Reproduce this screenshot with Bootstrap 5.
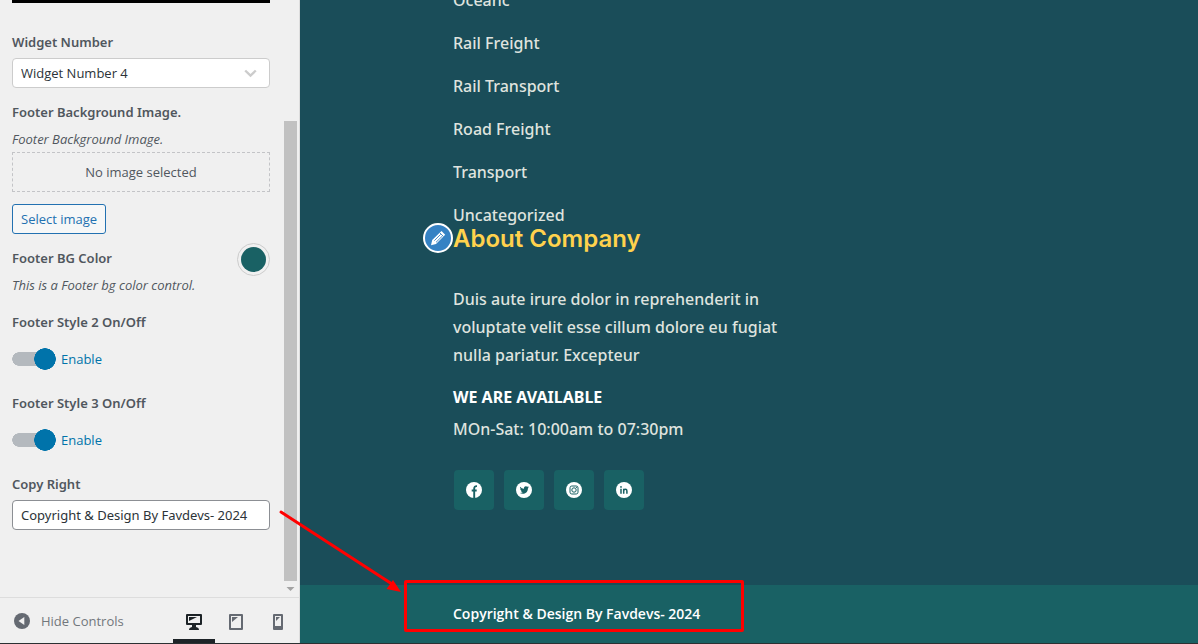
<!DOCTYPE html>
<html lang="en">
<head>
<meta charset="utf-8">
<meta name="viewport" content="width=device-width, initial-scale=1">
<title>Customizer - Footer</title>
<link href="https://cdn.jsdelivr.net/npm/bootstrap@5.3.0/dist/css/bootstrap.min.css" rel="stylesheet">
<style>
body{font:400 13px/20px "Open Sans",sans-serif;color:#50575e;background:#1a4d59}
.shell{min-height:100vh;border-bottom:1px solid #2b3032}
.side{flex:0 0 300px;background:#f0f0f0;border-right:1px solid #ddd}
.side-body{padding:0 14px 0 12px}
.top-bar{height:3px;background:#000;margin-bottom:27px}
.ttl{display:block;font-family:"Noto Sans",sans-serif;font-weight:600;line-height:24px;margin:0}
.hint{font-style:italic;line-height:18px;margin-top:6px}
.field{height:30px;padding:0 8px;margin-top:4px;font-size:13px;line-height:28px;border:1px solid #8c8f94;border-radius:4px;color:#2c3338;background-color:#fff}
input.field{font-family:"Noto Sans",sans-serif}
select.field{border-color:#ccc;margin-bottom:12px;background-position:right 12px center;background-size:13px 9px;background-image:url("data:image/svg+xml,%3Csvg xmlns='http://www.w3.org/2000/svg' viewBox='0 0 13 9'%3E%3Cpath d='M1.2 1.5l5.3 5 5.3-5' fill='none' stroke='%23ccc' stroke-width='2.4'/%3E%3C/svg%3E")}
.placeholder-box{height:40px;line-height:38px;border:1px dashed #c3c4c7;text-align:center;margin:4px 0 12px}
.btn-pick{height:30px;padding:0 8px;font-size:13px;line-height:28px;color:#2271b1;border:1px solid #2271b1;border-radius:3px;background:#f6f7f7;margin-bottom:9px}
.swatch-row .ttl{padding-top:3px}
.swatch{width:33px;height:33px;border:1px solid #ccc;border-radius:50%;padding:3px;background:#f0f0f0}
.swatch span{display:block;height:100%;border-radius:50%;background:#196164}
.toggle{height:22px;gap:5px;margin:14px 0 21px;color:#0073aa}
.toggle input{appearance:none;width:44px;height:22px;margin:0;background:radial-gradient(circle at 33px 11px,#0073aa 10.5px,transparent 11px),radial-gradient(circle at 7px 11px,#b4b9be 6.5px,transparent 7px),linear-gradient(#b4b9be,#b4b9be) 7px 4px/26px 14px no-repeat}
.scroller{flex:0 0 15px;padding-right:2px}
.scroller .thumb{margin-top:121px;background:#c1c1c1}
.side-foot{height:46px;border-top:1px solid #ddd;color:#72777c}
.side-foot button{border:0;background:none;padding:0;color:inherit}
.side-foot .collapse-btn{margin-left:14px;gap:11px}
.dev{width:42px;height:45px}
.side-foot .dev.on{border-bottom:4px solid #1d2327;padding-top:4px}
.site{font:500 16px/28px "Noto Sans",sans-serif;color:#dfe3df;min-width:0}
.site a{color:inherit;text-decoration:none}
.foot-main{padding-left:153px;overflow:hidden}
.cats{gap:23px;margin:-10px 0 0;line-height:20px}
.about{max-width:330px}
.about h2{font:600 24px/28px Inter,sans-serif;color:#ffd24d;margin:0 0 32px}
.edit{left:-30px;top:-2px;width:30px;height:30px;border:2px solid #fff;border-radius:50%;background:#3582c4;padding:0}
.avail{font-weight:700;color:#fff;margin-top:14px}
.hours{margin:4px 0 27px}
.socials{gap:10px;padding-left:1px}
.soc{width:40px;height:40px;border-radius:4px;background:#196164}
.copy{height:58px;padding-left:153px;background:#196164;color:#fff;font-family:"Open Sans",sans-serif;font-size:14px;font-weight:600}
.callout{left:104px;top:-5px;width:340px;height:52px;border:3px solid #f00;border-radius:2px;pointer-events:none}
.arrow{left:-23px;top:-78px;z-index:3;pointer-events:none}
</style>
</head>
<body>
<div class="shell d-flex">
  <aside class="side d-flex flex-column">
    <div class="d-flex flex-grow-1">
      <div class="side-body flex-grow-1">
        <div class="top-bar"></div>
        <label class="ttl" for="num">Widget Number</label>
        <select class="form-select field" id="num"><option>Widget Number 4</option></select>
        <div class="ttl">Footer Background Image.</div>
        <div class="hint">Footer Background Image.</div>
        <div class="placeholder-box">No image selected</div>
        <button type="button" class="btn btn-pick d-block">Select image</button>
        <div class="swatch-row d-flex justify-content-between align-items-start">
          <span class="ttl">Footer BG Color</span>
          <button type="button" class="swatch" aria-label="Footer BG Color"><span></span></button>
        </div>
        <div class="hint mt-0">This is a Footer bg color control.</div>
        <div class="ttl mt-3">Footer Style 2 On/Off</div>
        <div class="toggle d-flex align-items-center"><input type="checkbox" role="switch" id="s2" checked><label for="s2">Enable</label></div>
        <div class="ttl">Footer Style 3 On/Off</div>
        <div class="toggle d-flex align-items-center"><input type="checkbox" role="switch" id="s3" checked><label for="s3">Enable</label></div>
        <label class="ttl" for="cr">Copy Right</label>
        <input class="form-control field" id="cr" type="text" value="Copyright &amp; Design By Favdevs- 2024">
      </div>
      <div class="scroller d-flex flex-column">
        <div class="thumb flex-grow-1"></div>
        <svg width="13" height="16" viewBox="0 0 13 16"><path d="M2.5 6h8l-4 4z" fill="#a3a3a3"/></svg>
      </div>
    </div>
    <div class="side-foot d-flex align-items-center">
      <button type="button" class="collapse-btn d-flex align-items-center flex-grow-1">
        <svg width="16" height="16" viewBox="0 0 16 16"><circle cx="8" cy="8" r="8" fill="#656a72"/><path d="M10.3 4v8L4.5 8z" fill="#f0f0f0"/></svg>
        <span>Hide Controls</span>
      </button>
      <button type="button" class="dev on" aria-label="Desktop"><svg width="16" height="16" viewBox="0 0 16 16"><path fill="#1d2327" fill-rule="evenodd" d="M1 0h14q1 0 1 1v9q0 1-1 1h-5v2q3 .5 3 3H3q0-2.500 3-3v-2H1q-1 0-1-1V1q0-1 1-1zm1 2v7h12V2z"/><path fill="#1d2327" d="M3 3h8L3 7z"/></svg></button>
      <button type="button" class="dev" aria-label="Tablet"><svg width="14" height="16" viewBox="0 0 14 16"><path fill="#656a72" fill-rule="evenodd" d="M1 0h12q1 0 1 1v14q0 1-1 1H1q-1 0-1-1V1q0-1 1-1zm1 2v12h10V2z"/><path fill="#656a72" d="M3 3h6L3 8z"/></svg></button>
      <button type="button" class="dev" aria-label="Mobile"><svg width="10" height="16" viewBox="0 0 10 16"><path fill="#656a72" fill-rule="evenodd" d="M1 0h8q1 0 1 1v14q0 1-1 1H1q-1 0-1-1V1q0-1 1-1zm1 2v10h6V2z"/><path fill="#656a72" d="M3 3h4L3 7z"/></svg></button>
    </div>
  </aside>
  <main class="site flex-grow-1 d-flex flex-column">
    <div class="foot-main flex-grow-1">
      <ul class="cats list-unstyled d-flex flex-column">
        <li><a href="#">Oceanc</a></li>
        <li><a href="#">Rail Freight</a></li>
        <li><a href="#">Rail Transport</a></li>
        <li><a href="#">Road Freight</a></li>
        <li><a href="#">Transport</a></li>
        <li><a href="#">Uncategorized</a></li>
      </ul>
      <section class="about position-relative">
        <button type="button" class="edit position-absolute d-flex align-items-center justify-content-center" aria-label="Edit widget"><svg width="20" height="20" viewBox="0 0 20 20"><path fill="#fff" d="M13.500 3l3.700 3.700L8 16l-5 1.200L4.200 12z"/><path d="M6.300 12.700l6.400-6.400M8 14.300L14.400 8M11.800 4.800l3.600 3.600" stroke="#3582c4" stroke-width=".9"/></svg></button>
        <h2>About Company</h2>
        <div>Duis aute irure dolor in reprehenderit in voluptate velit esse cillum dolore eu fugiat nulla pariatur. Excepteur</div>
        <div class="avail">WE ARE AVAILABLE</div>
        <div class="hours">MOn-Sat: 10:00am to 07:30pm</div>
        <div class="socials d-flex">
          <a href="#" class="soc d-flex align-items-center justify-content-center" aria-label="Facebook"><svg width="16" height="16" viewBox="0 0 16 16"><circle cx="8" cy="8" r="8" fill="#fff"/><path d="M8.200 16V6.600q0-2.700 2.800-2.500M5.700 8.500h5" fill="none" stroke="#196164" stroke-width="1.900"/></svg></a>
          <a href="#" class="soc d-flex align-items-center justify-content-center" aria-label="Twitter"><svg width="16" height="16" viewBox="0 0 16 16"><circle cx="8" cy="8" r="8" fill="#fff"/><path fill="#196164" d="M4 4.800q1.600 1.900 4 2-.3-2.600 1.900-2.600 1 0 1.500.6l1.300-.5-.8 1.200 1-.2-1 1.100c0 3.500-2.500 5.400-5 5.400q-1.800 0-3-.8 1.800 0 2.800-.8-1.500-.2-1.800-1.400h.8Q4.200 8.200 4.200 6.800l.8.2Q3.500 6 4 4.800z"/></svg></a>
          <a href="#" class="soc d-flex align-items-center justify-content-center" aria-label="Instagram"><svg width="16" height="16" viewBox="0 0 16 16"><circle cx="8" cy="8" r="8" fill="#fff"/><g fill="none" stroke="#196164"><rect x="4" y="4" width="8" height="8" rx="1.800"/><circle cx="8" cy="8" r="2.200"/></g><circle cx="10.500" cy="5.500" r=".6" fill="#196164"/></svg></a>
          <a href="#" class="soc d-flex align-items-center justify-content-center" aria-label="LinkedIn"><svg width="16" height="16" viewBox="0 0 16 16"><circle cx="8" cy="8" r="8" fill="#fff"/><path d="M5 6.700v5M7.700 11.700v-5M7.700 9q.2-1.700 1.700-1.700t1.500 1.700v2.700" fill="none" stroke="#196164" stroke-width="1.500"/><circle cx="5" cy="4.900" r=".9" fill="#196164"/></svg></a>
        </div>
      </section>
    </div>
    <footer class="copy position-relative d-flex align-items-center">
      <span>Copyright &amp; Design By Favdevs- 2024</span>
      <div class="callout position-absolute"></div>
      <svg class="arrow position-absolute" width="130" height="90" viewBox="0 0 130 90"><path d="M4 5l111 72" stroke="#f00" stroke-width="3" stroke-linecap="round"/><path d="M124 85l-14.500-3 6.500-9z" fill="#f00"/></svg>
    </footer>
  </main>
</div>
<script src="https://cdn.jsdelivr.net/npm/bootstrap@5.3.0/dist/js/bootstrap.bundle.min.js"></script>
</body>
</html>
